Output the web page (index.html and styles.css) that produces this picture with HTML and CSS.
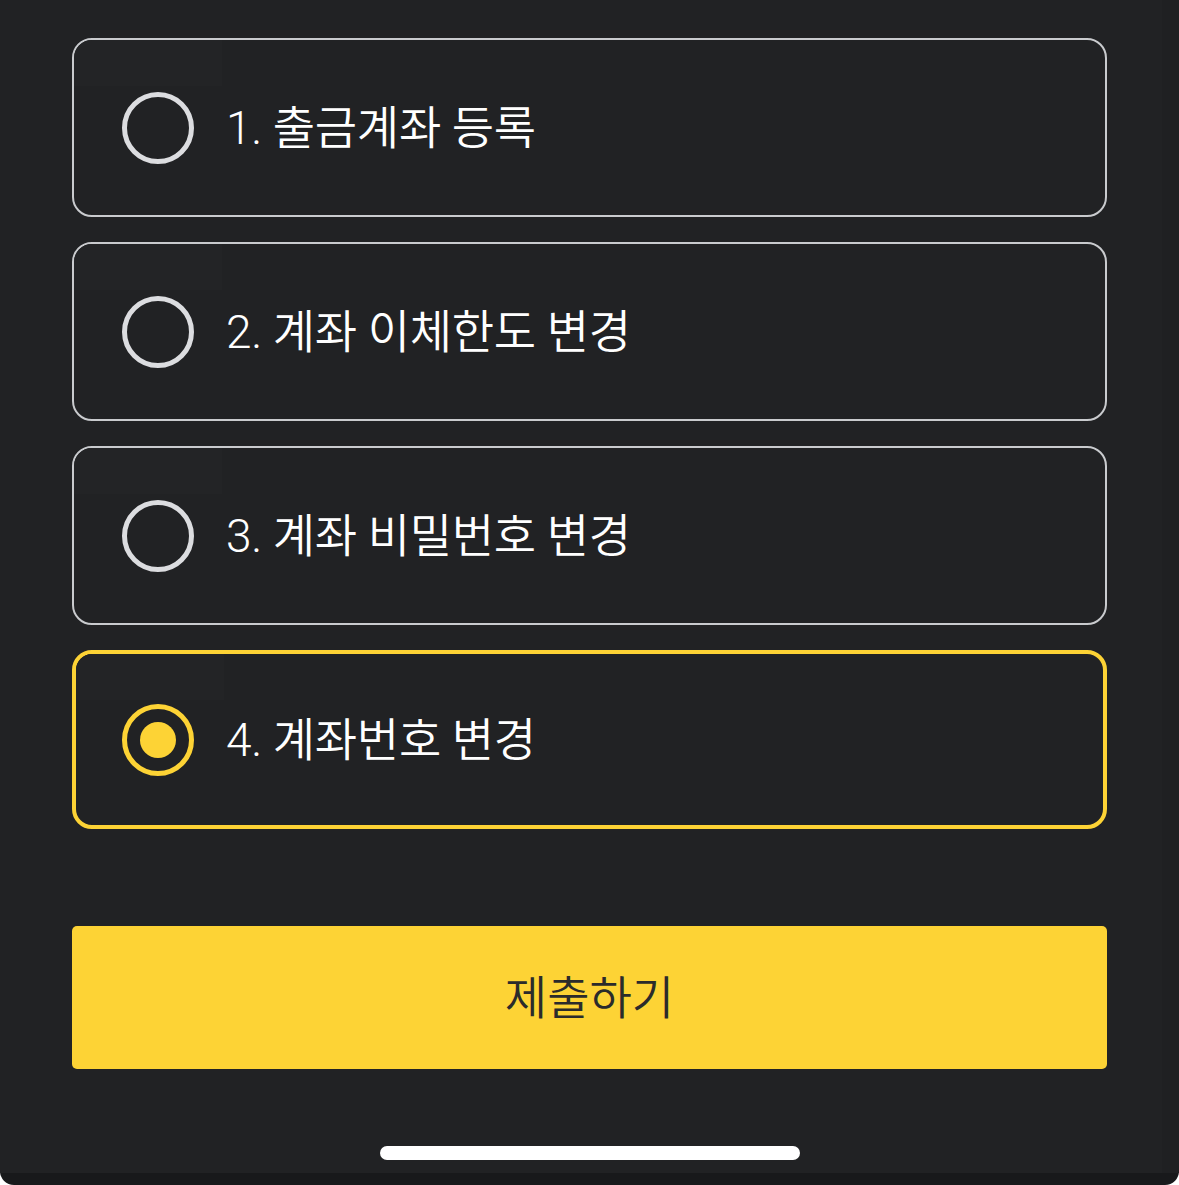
FILE: index.html
```html
<!DOCTYPE html>
<html lang="ko">
	<head>
		<meta charset="UTF-8" />
		<meta name="viewport" content="width=device-width, initial-scale=1.0" />
		<title>계좌 변경 유형 선택</title>
		<link rel="stylesheet" href="styles.css">
	</head>
	<body>
		<div class="screen">
			<div class="content">
				<div class="options">
					<label class="option">
						<span class="radio"></span>
						<span class="label">1. 출금계좌 등록</span>
					</label>
					<label class="option">
						<span class="radio"></span>
						<span class="label">2. 계좌 이체한도 변경</span>
					</label>
					<label class="option">
						<span class="radio"></span>
						<span class="label">3. 계좌 비밀번호 변경</span>
					</label>
					<label class="option selected">
						<span class="radio"></span>
						<span class="label">4. 계좌번호 변경</span>
					</label>
				</div>
				<button class="submit">제출하기</button>
				<div class="home-bar"></div>
			</div>
		</div>
	</body>
</html>
```

FILE: styles.css
```css
/* Dark bottom sheet style */
body {
	margin: 0;
	padding: 0;
	background-color: #fff;
	font-family: Roboto, "Noto Sans CJK KR", sans-serif;
}
.screen {
	width: 1179px;
	height: 1185px;
	background-color: #18191b;
	border-radius: 0 0 14px 14px;
	overflow: hidden;
}
.content {
	height: 1173px;
	background-color: #212224;
	box-shadow: inset -17px 0 0 #1f2022;
	display: flex;
	flex-direction: column;
	padding: 38px 72px 0;
	box-sizing: border-box;
}
.options {
	display: flex;
	flex-direction: column;
	gap: 25px;
}
.option {
	position: relative;
	height: 179px;
	box-sizing: border-box;
	border: 2px solid #c9cbce;
	border-radius: 20px;
	display: flex;
	align-items: center;
	padding-left: 48px;
	gap: 32px;
	cursor: pointer;
}
/* faint lighter patch in the top left corner */
.option::before {
	content: "";
	position: absolute;
	left: 0;
	top: 0;
	width: 148px;
	height: 46px;
	background-color: #232426;
	border-top-left-radius: 18px;
}
.radio {
	position: relative;
	width: 72px;
	height: 72px;
	box-sizing: border-box;
	border: 5px solid #dcdde0;
	border-radius: 50%;
	flex-shrink: 0;
}
.label {
	position: relative;
	color: #fff;
	font-size: 46px;
	font-weight: 350;
	letter-spacing: -0.3px;
	padding-bottom: 8px;
}
.option.selected {
	border: 4px solid #fdd335;
	padding-left: 46px;
}
.option.selected::before {
	border-top-left-radius: 16px;
}
.option.selected .radio {
	border-color: #fdd335;
}
.option.selected .radio::after {
	content: "";
	position: absolute;
	left: 13px;
	top: 13px;
	width: 36px;
	height: 36px;
	border-radius: 50%;
	background-color: #fdd335;
}
.submit {
	margin-top: 97px;
	height: 143px;
	padding: 0 0 8px;
	border: none;
	border-radius: 5px;
	background-color: #fdd335;
	color: #2b2b2b;
	font-family: Roboto, "Noto Sans CJK KR", sans-serif;
	font-size: 46px;
	font-weight: 350;
	cursor: pointer;
}
.home-bar {
	align-self: center;
	margin-top: 77px;
	width: 420px;
	height: 14px;
	border-radius: 7px;
	background-color: #fff;
}
```
